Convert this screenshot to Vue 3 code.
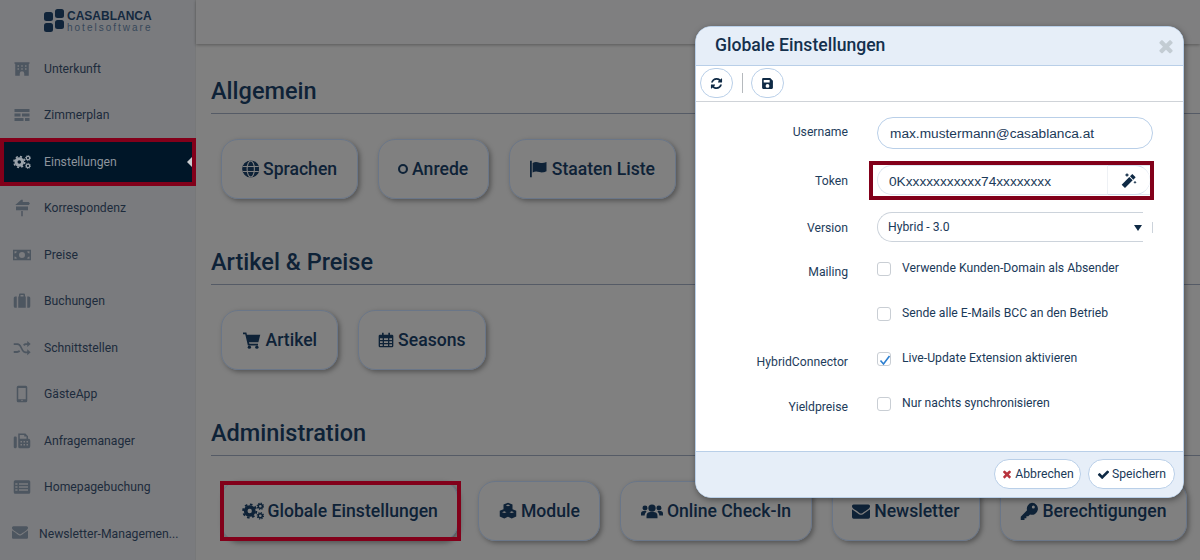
<script setup>
const navItems = [
  { icon: 'hotel', label: 'Unterkunft' },
  { icon: 'plan', label: 'Zimmerplan' },
  { icon: 'cogs', label: 'Einstellungen', active: true },
  { icon: 'signs', label: 'Korrespondenz' },
  { icon: 'money', label: 'Preise' },
  { icon: 'suitcase', label: 'Buchungen' },
  { icon: 'random', label: 'Schnittstellen' },
  { icon: 'mobile', label: 'GästeApp' },
  { icon: 'fax', label: 'Anfragemanager' },
  { icon: 'list', label: 'Homepagebuchung' },
  { icon: 'envelope', label: 'Newsletter-Managemen...', wide: true }
]
const sections = [
  { title: 'Allgemein', buttons: [
    { icon: 'globe', label: 'Sprachen', w: 17.5 },
    { icon: 'ring', label: 'Anrede', w: 10 },
    { icon: 'flag', label: 'Staaten Liste', w: 18.5 }
  ] },
  { title: 'Artikel & Preise', buttons: [
    { icon: 'cart', label: 'Artikel', w: 20 },
    { icon: 'calendar', label: 'Seasons', w: 16 }
  ] },
  { title: 'Administration', buttons: [
    { icon: 'cogs', label: 'Globale Einstellungen', w: 22, marked: true },
    { icon: 'cubes', label: 'Module', w: 18 },
    { icon: 'users', label: 'Online Check-In', w: 22 },
    { icon: 'envelope', label: 'Newsletter', w: 18 },
    { icon: 'key', label: 'Berechtigungen', w: 18 }
  ] }
]
const checks = [
  { label: 'Mailing', text: 'Verwende Kunden-Domain als Absender', on: false },
  { label: '', text: 'Sende alle E-Mails BCC an den Betrieb', on: false },
  { label: 'HybridConnector', text: 'Live-Update Extension aktivieren', on: true },
  { label: 'Yieldpreise', text: 'Nur nachts synchronisieren', on: false }
]
</script>

<template>
  <div class="page">
    <svg class="sprite" aria-hidden="true">
      <symbol id="hotel" viewBox="0 0 24 24"><path fill-rule="evenodd" d="M2 3h20v2h-1v16h-6v-3a3 3 0 0 0-6 0v3H3V5H2zM6 7v2h2V7zm5 0v2h2V7zm5 0v2h2V7zM6 11v2h2v-2zm5 0v2h2v-2zm5 0v2h2v-2z"/></symbol>
      <symbol id="plan" viewBox="0 0 24 24"><path d="M2 4h20v4H2zM2 10h8v4H2zM12 10h10v4H12zM2 16h12v4H2zM16 16h6v4h-6z"/></symbol>
      <symbol id="cogs" viewBox="0 0 30 24">
        <g fill="none" stroke="currentColor">
          <circle cx="10.500" cy="12" r="5.500" stroke-width="5"/>
          <circle cx="10.500" cy="12" r="9" stroke-width="2.600" stroke-dasharray="3.530 3.540"/>
          <circle cx="25" cy="5.500" r="2.800" stroke-width="2"/>
          <circle cx="25" cy="5.500" r="4.300" stroke-width="1.500" stroke-dasharray="1.690 1.690"/>
          <circle cx="25" cy="18.500" r="2.800" stroke-width="2"/>
          <circle cx="25" cy="18.500" r="4.300" stroke-width="1.500" stroke-dasharray="1.690 1.690"/>
        </g>
      </symbol>
      <symbol id="signs" viewBox="0 0 24 24"><path d="M11 1h2v3h8l1.500 2L21 8H3zM4 10h16v5H4zM11 16h2v7h-2z"/></symbol>
      <symbol id="money" viewBox="0 0 24 24"><path fill-rule="evenodd" d="M0 5h24v14H0zM12 8a4 4 0 1 0 0 8 4 4 0 0 0 0-8zM2 7v3a3 3 0 0 0 3-3zm17 0a3 3 0 0 0 3 3V7zM2 14v3h3a3 3 0 0 0-3-3zm20 0a3 3 0 0 0-3 3h3z"/></symbol>
      <symbol id="suitcase" viewBox="0 0 24 24"><path fill-rule="evenodd" d="M8 6V3.500A1.500 1.500 0 0 1 9.500 2h5A1.500 1.500 0 0 1 16 3.500V6h1v15H7V6zm2 0h4V4h-4zM1 8a2 2 0 0 1 2-2h2v15H3a2 2 0 0 1-2-2zm18-2h2a2 2 0 0 1 2 2v11a2 2 0 0 1-2 2h-2z"/></symbol>
      <symbol id="random" viewBox="0 0 24 24"><path d="M1 5.500h4.500c4 0 5.200 3 6.700 6s2.300 5 5.300 5H19V13.500l4.500 4-4.500 4V19h-1.500c-4 0-5.500-3-7-6S8 8 5.500 8H1zM1 16h4.500c1 0 2-.5 2.600-1.200l1.500 2.300C8.400 18 7 18.500 5.500 18.500H1zM13.500 7.400C14.500 6 16 5.500 17.500 5.500H19V2.500l4.500 4-4.500 4V8h-1.500c-1 0-1.900.4-2.600 1.300z"/></symbol>
      <symbol id="mobile" viewBox="0 0 24 24"><path fill-rule="evenodd" d="M7 1h10a2 2 0 0 1 2 2v18a2 2 0 0 1-2 2H7a2 2 0 0 1-2-2V3a2 2 0 0 1 2-2zm0 3v15h10V4zm5 15.800a1 1 0 1 0 0 2 1 1 0 0 0 0-2z"/></symbol>
      <symbol id="fax" viewBox="0 0 24 24"><path fill-rule="evenodd" d="M1 7.500A1.500 1.500 0 0 1 2.500 6h1A1.500 1.500 0 0 1 5 7.500V20a1.500 1.500 0 0 1-1.500 1.500h-1A1.500 1.500 0 0 1 1 20zM7 2h9.500L20 5.500V9a2.500 2.500 0 0 1 3 2.500V19a2.500 2.500 0 0 1-2.500 2.500H9A2 2 0 0 1 7 19.500zM9 4v5h9V6h-3V4zm1 8v2h2v-2zm4 0v2h2v-2zm4 0v2h2v-2zm-8 4v2h2v-2zm4 0v2h2v-2zm4 0v2h2v-2z"/></symbol>
      <symbol id="list" viewBox="0 0 24 24"><path fill-rule="evenodd" d="M3 3h18a2 2 0 0 1 2 2v14a2 2 0 0 1-2 2H3a2 2 0 0 1-2-2V5a2 2 0 0 1 2-2zm0 4v2h3V7zm5 0v2h12V7zM3 11v2h3v-2zm5 0v2h12v-2zM3 15v2h3v-2zm5 0v2h12v-2z"/></symbol>
      <symbol id="envelope" viewBox="0 0 1792 1792"><path d="M1792 710v794q0 66-47 113t-113 47h-1472q-66 0-113-47t-47-113v-794q44 49 101 87 362 246 497 345 57 42 92.500 65.500t94.500 48 110 24.500h2q51 0 110-24.500t94.500-48 92.500-65.500q170-123 498-345 57-39 100-87zm0-294q0 79-49 151t-122 123q-376 261-468 325-10 7-42.500 30.500t-54 38-52 32.500-57.500 27-50 9h-2q-23 0-50-9t-57.500-27-52-32.500-54-38-42.500-30.500q-91-64-262-182.500t-205-142.500q-62-42-117-115.500t-55-136.500q0-78 41.500-130t118.500-52h1472q65 0 112.500 47t47.500 113z"/></symbol>
      <symbol id="globe" viewBox="0 0 24 24"><g fill="none" stroke="currentColor" stroke-width="1.500"><circle cx="12" cy="12" r="11" fill="currentColor"/><g stroke="#808080"><ellipse cx="12" cy="12" rx="5" ry="11"/><path d="M1 8.500h22M1 15.500h22"/></g></g></symbol>
      <symbol id="ring" viewBox="0 0 24 24"><circle cx="12" cy="12" r="9.500" fill="none" stroke="currentColor" stroke-width="5"/></symbol>
      <symbol id="flag" viewBox="0 0 24 24"><path d="M1 1h2.400v22H1zM4.500 4c3-2 6-1.500 9-.5s5.500.8 9.500-.8V15c-4 1.800-6.500 2-9.500 1s-6-1.300-9 .5z"/></symbol>
      <symbol id="cart" viewBox="0 0 24 24"><path d="M0 2h4.500l.7 3H23l-2.500 10H8l.5 2H20v2.300H6.500L3 4.300H0z"/><circle cx="8.500" cy="21.500" r="2.200"/><circle cx="18.500" cy="21.500" r="2.200"/></symbol>
      <symbol id="calendar" viewBox="0 0 24 24"><path fill-rule="evenodd" d="M6 1h2.500v3h7V1H18v3h3a2 2 0 0 1 2 2v15a2 2 0 0 1-2 2H3a2 2 0 0 1-2-2V6a2 2 0 0 1 2-2h3zM3 9.500V12h4V9.500zm6 0V12h6V9.500zm8 0V12h4V9.500zM3 14v2.500h4V14zm6 0v2.500h6V14zm8 0v2.500h4V14zM3 18.500V21h4v-2.500zm6 0V21h6v-2.500zm8 0V21h4v-2.500z"/></symbol>
      <symbol id="cubes" viewBox="0 0 24 24"><path fill-rule="evenodd" d="M12 1l6 2.300v6.500l5 2v7.500L17 22l-5-2.200L7 22l-6-2.700v-7.500l5-2V3.300zM12 3.300L9 4.500l3 1.200 3-1.200zM7 12.300l-3 1.200 3 1.200 3-1.200zm10 0l-3 1.200 3 1.200 3-1.200z"/></symbol>
      <symbol id="users" viewBox="0 0 30 24"><circle cx="15" cy="8" r="5"/><circle cx="5.500" cy="8" r="3.400"/><circle cx="24.500" cy="8" r="3.400"/><path d="M7.500 22v-3a5.500 5.500 0 0 1 5.500-5.500h4a5.500 5.500 0 0 1 5.500 5.500v3zM0 18v-2.500A3.500 3.500 0 0 1 3.500 12h3c.9 0 1 .6.600 1.200-1.200 1.300-2 2.900-2.100 4.800zM30 18v-2.500a3.500 3.500 0 0 0-3.500-3.500h-3c-.9 0-1 .6-.6 1.200 1.200 1.300 2 2.900 2.100 4.800z"/></symbol>
      <symbol id="key" viewBox="0 0 24 24"><path fill-rule="evenodd" d="M16 1a8 8 0 1 1-2.600 15.600L11 19H8.500v2.500H6V24H1v-4.500l8.400-8.400A8 8 0 0 1 16 1zm1.800 3.500a2 2 0 1 0 0 4 2 2 0 0 0 0-4z"/></symbol>
      <symbol id="wand" viewBox="0 0 24 24"><path d="M17 3l5 5-3.500 3.500-5-5zM12.500 7.500l5 5L6 24l-5-5zM9 1l1 2.500L12.500 4.500 10 5.500 9 8 8 5.500 5.500 4.500 8 3.500zM21 13l.8 1.700 1.700.8-1.700.8L21 18l-.8-1.700-1.700-.8 1.700-.8z"/></symbol>
      <symbol id="refresh" viewBox="0 0 1792 1792"><path d="M1639 1056q0 5-1 7-64 268-268 434.500t-478 166.500q-146 0-282.500-55t-243.500-157l-129 129q-19 19-45 19t-45-19-19-45v-448q0-26 19-45t45-19h448q26 0 45 19t19 45-19 45l-137 137q71 66 161 102t187 36q134 0 250-65t186-179q11-17 53-117 8-23 30-23h192q13 0 22.500 9.500t9.500 22.500zm25-800v448q0 26-19 45t-45 19h-448q-26 0-45-19t-19-45 19-45l138-138q-148-137-349-137-134 0-250 65t-186 179q-11 17-53 117-8 23-30 23h-199q-13 0-22.500-9.500t-9.500-22.500v-7q65-268 270-434.500t480-166.500q146 0 284 55.500t245 156.500l130-129q19-19 45-19t45 19 19 45z"/></symbol>
      <symbol id="save" viewBox="0 0 24 24"><path fill-rule="evenodd" d="M4 2h13l5 5v13a2 2 0 0 1-2 2H4a2 2 0 0 1-2-2V4a2 2 0 0 1 2-2zm1 3.500V10h11V5.500zM12 13a3.500 3.500 0 1 0 0 7 3.500 3.500 0 0 0 0-7z"/></symbol>
      <symbol id="check" viewBox="0 0 1792 1792"><path d="M1671 566q0 40-28 68l-724 724-136 136q-28 28-68 28t-68-28l-136-136-362-362q-28-28-28-68t28-68l136-136q28-28 68-28t68 28l294 295 656-657q28-28 68-28t68 28l136 136q28 28 28 68z"/></symbol>
      <symbol id="times" viewBox="0 0 1792 1792"><path d="M1490 1322q0 40-28 68l-136 136q-28 28-68 28t-68-28l-294-294-294 294q-28 28-68 28t-68-28l-136-136q-28-28-28-68t28-68l294-294-294-294q-28-28-28-68t28-68l136-136q28-28 68-28t68 28l294 294 294-294q28-28 68-28t68 28l136 136q28 28 28 68t-28 68l-294 294 294 294q28 28 28 68z"/></symbol>
    </svg>

    <aside class="sidebar">
      <div class="logo">
        <div class="logo-mark"><i></i><i class="up"></i><i></i><i class="up"></i></div>
        <div class="logo-text"><b>CASABLANCA</b><span>hotelsoftware</span></div>
      </div>
      <nav class="nav">
        <div
          v-for="item in navItems"
          :key="item.label"
          class="nav-item"
          :class="{ active: item.active, wide: item.wide }"
        >
          <svg class="nav-icon"><use :href="'#' + item.icon" /></svg>
          <span class="nav-label">{{ item.label }}</span>
        </div>
      </nav>
    </aside>

    <main class="main">
      <div class="topbar"></div>
      <section v-for="s in sections" :key="s.title" class="section">
        <h2 class="section-title">{{ s.title }}</h2>
        <div class="tiles">
          <div v-for="b in s.buttons" :key="b.label" class="tile" :class="{ marked: b.marked }">
            <svg class="tile-icon" :style="{ width: b.w + 'px' }"><use :href="'#' + b.icon" /></svg>
            <span>{{ b.label }}</span>
          </div>
        </div>
      </section>
    </main>

    <div class="modal">
      <header class="modal-head">
        <span class="modal-title">Globale Einstellungen</span>
        <svg class="modal-close"><use href="#times" /></svg>
      </header>
      <div class="toolbar">
        <div class="round-btn"><svg><use href="#refresh" /></svg></div>
        <div class="tool-sep"></div>
        <div class="round-btn"><svg><use href="#save" /></svg></div>
      </div>
      <div class="form">
        <div class="row row-user">
          <label class="lbl">Username</label>
          <div class="field">max.mustermann@casablanca.at</div>
        </div>
        <div class="row row-token">
          <label class="lbl">Token</label>
          <div class="token">
            <div class="token-text">0Kxxxxxxxxxxx74xxxxxxxx</div>
            <div class="token-btn"><svg><use href="#wand" /></svg></div>
            <div class="token-mark"></div>
          </div>
        </div>
        <div class="row row-version">
          <label class="lbl">Version</label>
          <div class="select"><span>Hybrid - 3.0</span><i class="arrow"></i></div>
        </div>
        <div v-for="c in checks" :key="c.text" class="row row-check">
          <label class="lbl lbl-low">{{ c.label }}</label>
          <span class="box" :class="{ on: c.on }">
            <svg v-if="c.on" viewBox="0 0 14 14"><path d="M2.500 7.500l3 3.500 6-8" fill="none" stroke="#2d7fd0" stroke-width="1.600"/></svg>
          </span>
          <span class="check-text">{{ c.text }}</span>
        </div>
      </div>
      <footer class="modal-foot">
        <div class="foot-btn"><svg class="x"><use href="#times" /></svg>Abbrechen</div>
        <div class="foot-btn"><svg><use href="#check" /></svg>Speichern</div>
      </footer>
    </div>
  </div>
</template>

<style>
html, body { margin: 0; padding: 0; background: #808080; }
</style>

<style scoped>
.page {
  position: relative;
  display: flex;
  width: 1200px;
  height: 560px;
  overflow: hidden;
  background: #808080;
  font-family: Roboto, "Liberation Sans", sans-serif;
  color: #0e2237;
}
.sprite { position: absolute; width: 0; height: 0; }
svg { fill: currentColor; }

.sidebar {
  flex: 0 0 196px;
  background: #7a7b7e;
  border-right: 1px solid #777879;
  box-sizing: border-box;
}
.logo {
  height: 44px;
  display: flex;
  align-items: flex-start;
  padding: 9px 0 0 44px;
  box-sizing: border-box;
  gap: 3px;
}
.logo-mark {
  display: grid;
  grid-template-columns: 10px 10px;
  grid-auto-rows: 10px;
  gap: 1px 0;
  width: 20px;
}
.logo-mark i { background: #10243a; border-radius: 2.500px; width: 9px; height: 9px; margin-top: 3px; }
.logo-mark i.up { margin-top: 0; margin-left: 1px; }
.logo-text { display: flex; flex-direction: column; line-height: 1; color: #14293f; }
.logo-text b { font: 700 12px/12px "Liberation Sans", sans-serif; padding-top: 1px; white-space: nowrap; }
.logo-text span { font: 400 10px/10px "Liberation Sans", sans-serif; letter-spacing: 2px; color: #37485a; padding-top: 1px; white-space: nowrap; }

.nav { padding-top: 1.500px; }
.nav-item {
  height: 46.500px;
  display: flex;
  align-items: center;
  box-sizing: border-box;
  padding-left: 13px;
  color: #4d5660;
  position: relative;
}
.nav-icon { width: 18px; height: 18px; flex: none; }
.nav-label {
  margin-left: 13px;
  font-size: 12.200px;
  color: #1d2b3c;
  white-space: nowrap;
}
.nav-item.wide { padding-left: 12px; }
.nav-item.wide .nav-icon { width: 16px; height: 16px; margin-top: -4px; }
.nav-item.wide .nav-label { margin-left: 11px; }
.nav-item.active {
  background: #001628;
  color: #9aa2aa;
}
.nav-item.active::before {
  content: "";
  position: absolute;
  left: 0;
  right: -1px;
  top: 0;
  height: 48px;
  margin-top: -1px;
  border: 4px solid #82001a;
  box-sizing: border-box;
}
.nav-item.active::after {
  content: "";
  position: absolute;
  right: 3px;
  top: 18px;
  border: 5px solid transparent;
  border-left: 0;
  border-right: 5px solid #c9ccd0;
}
.nav-item.active .nav-label { color: #8d949c; }

.main { flex: 1; min-width: 0; }
.topbar {
  height: 44px;
  box-shadow: 0 1px 3px rgba(0,0,0,.3);
  background: #7f7f80;
}
.section { padding-left: 15px; margin-bottom: 47px; }
.section:first-of-type { margin-top: 31px; }
.section-title {
  margin: 0;
  font: 500 23.500px/32px Roboto, sans-serif;
  padding-bottom: 6px;
  border-bottom: 1px solid #555b66;
  color: #0e2237;
}
.tiles { display: flex; gap: 20px; padding: 25px 0 0 10px; }
.tile {
  position: relative;
  height: 60px;
  padding: 0 19.500px 1px;
  display: flex;
  align-items: center;
  gap: 4px;
  box-sizing: border-box;
  border: 1px solid #6a7688;
  border-radius: 17px;
  box-shadow: 2px 2px 5px rgba(0,0,0,.35);
  font-size: 17.600px;
  font-weight: 500;
  white-space: nowrap;
  flex: none;
}
.tile.marked::after {
  content: "";
  position: absolute;
  left: -2px;
  right: -4px;
  top: -1px;
  bottom: -1px;
  border: 4px solid #82001a;
  box-sizing: border-box;
}
.tile-icon { height: 18px; flex: none; }

.modal {
  position: absolute;
  left: 695px;
  top: 26px;
  width: 489px;
  height: 472px;
  box-sizing: border-box;
  background: #fff;
  border: 1px solid #b9cfe8;
  border-radius: 16px;
  box-shadow: 1px 2px 6px rgba(0,0,0,.4);
  overflow: hidden;
  display: flex;
  flex-direction: column;
  color: #1b3a59;
  font-size: 12.200px;
}
.modal-head {
  height: 39px;
  flex: none;
  background: #e6eef8;
  border-bottom: 1px solid #b9cfe8;
  display: flex;
  align-items: center;
  justify-content: space-between;
  padding: 0 7px 0 19px;
  box-sizing: border-box;
}
.modal-title { font: 500 17.600px/1 Roboto, sans-serif; color: #14304d; margin-top: -1px; }
.modal-close { width: 20px; height: 20px; color: #c3ccd3; }
.toolbar {
  height: 36px;
  flex: none;
  display: flex;
  align-items: center;
  padding: 0 4px 1px;
  border-bottom: 1px solid #cfd3d8;
  box-sizing: border-box;
}
.round-btn {
  width: 33px;
  height: 30px;
  border: 1px solid #b9cfe8;
  border-radius: 16px;
  box-sizing: border-box;
  display: flex;
  align-items: center;
  justify-content: center;
  color: #0f2a45;
}
.round-btn svg { width: 13px; height: 13px; }
.tool-sep { width: 1px; height: 20px; background: #b5b9bd; margin: 0 8px 0 9px; }

.form { flex: 1; padding-top: 15px; }
.row { display: flex; align-items: center; }
.lbl { width: 152px; flex: none; margin-right: 29px; text-align: right; color: #1e3d5c; }
.row-user { height: 32px; margin-bottom: 15px; }
.row-token { height: 31px; margin-bottom: 17px; }
.row-version { height: 30px; margin-bottom: 4px; }
.row-check { height: 45px; }
.lbl-low { padding-top: 7px; }
.row-user .lbl { margin-top: -2px; }
.row-token .lbl, .row-version .lbl { padding-top: 2px; }
.field {
  width: 276px;
  height: 32px;
  box-sizing: border-box;
  border: 1px solid #b9cfe8;
  border-radius: 16px;
  padding: 0 12px;
  font: 13.700px/31px "Liberation Sans", sans-serif;
  color: #1b3a59;
}
.token {
  position: relative;
  width: 273px;
  height: 30px;
  display: flex;
  box-sizing: border-box;
  border: 1px solid #dfe7f0;
  border-right: 0;
  border-radius: 15px 0 0 15px;
  font: 13.700px/31px "Liberation Sans", sans-serif;
}
.token-text { flex: 1; padding-left: 11px; }
.token-btn {
  width: 42px;
  margin: -1px 0;
  border: 1px solid #cfdcec;
  border-right: 0;
  border-left-color: #eef1f5;
  border-radius: 0 15px 15px 0;
  display: flex;
  align-items: center;
  justify-content: center;
  color: #0f2a45;
}
.token-btn svg { width: 16px; height: 16px; }
.token-mark {
  position: absolute;
  left: -9px;
  top: -5px;
  width: 285px;
  height: 39px;
  border: 4px solid #82001a;
  box-sizing: border-box;
}
.select {
  position: relative;
  width: 266px;
  height: 30px;
  box-sizing: border-box;
  border: 1px solid #ccd3db;
  border-right: 0;
  border-radius: 15px 0 0 15px;
  padding-left: 10px;
  font: 12.200px/28px Roboto, sans-serif;
  color: #1b3a59;
}
.select::after {
  content: "";
  position: absolute;
  right: -10px;
  top: 9px;
  width: 1px;
  height: 11px;
  background: #ccd3db;
}
.arrow {
  position: absolute;
  right: 1px;
  top: 12px;
  border: 4px solid transparent;
  border-top: 6px solid #0f2a45;
  border-bottom: 0;
}
.box {
  width: 14px;
  height: 14px;
  box-sizing: border-box;
  border: 1px solid #c9ced4;
  border-radius: 3px;
  flex: none;
  margin-right: 11px;
  margin-top: 1px;
  display: block;
}
.box svg { display: block; width: 14px; height: 14px; }
.check-text { margin-top: -1px; }

.modal-foot {
  height: 46px;
  flex: none;
  background: #e6eef8;
  border-top: 1px solid #b9cfe8;
  box-sizing: border-box;
  display: flex;
  justify-content: flex-end;
  align-items: center;
  gap: 7px;
  padding: 0 8px 1px 0;
}
.foot-btn {
  height: 30px;
  width: 87px;
  box-sizing: border-box;
  background: #fff;
  border: 1px solid #b9cfe8;
  border-radius: 15px;
  display: flex;
  align-items: center;
  justify-content: center;
  gap: 2px;
  color: #1b3a59;
}
.foot-btn svg { width: 13px; height: 13px; color: #0f2a45; }
.foot-btn svg.x { color: #b8333d; width: 12px; height: 12px; }
</style>
